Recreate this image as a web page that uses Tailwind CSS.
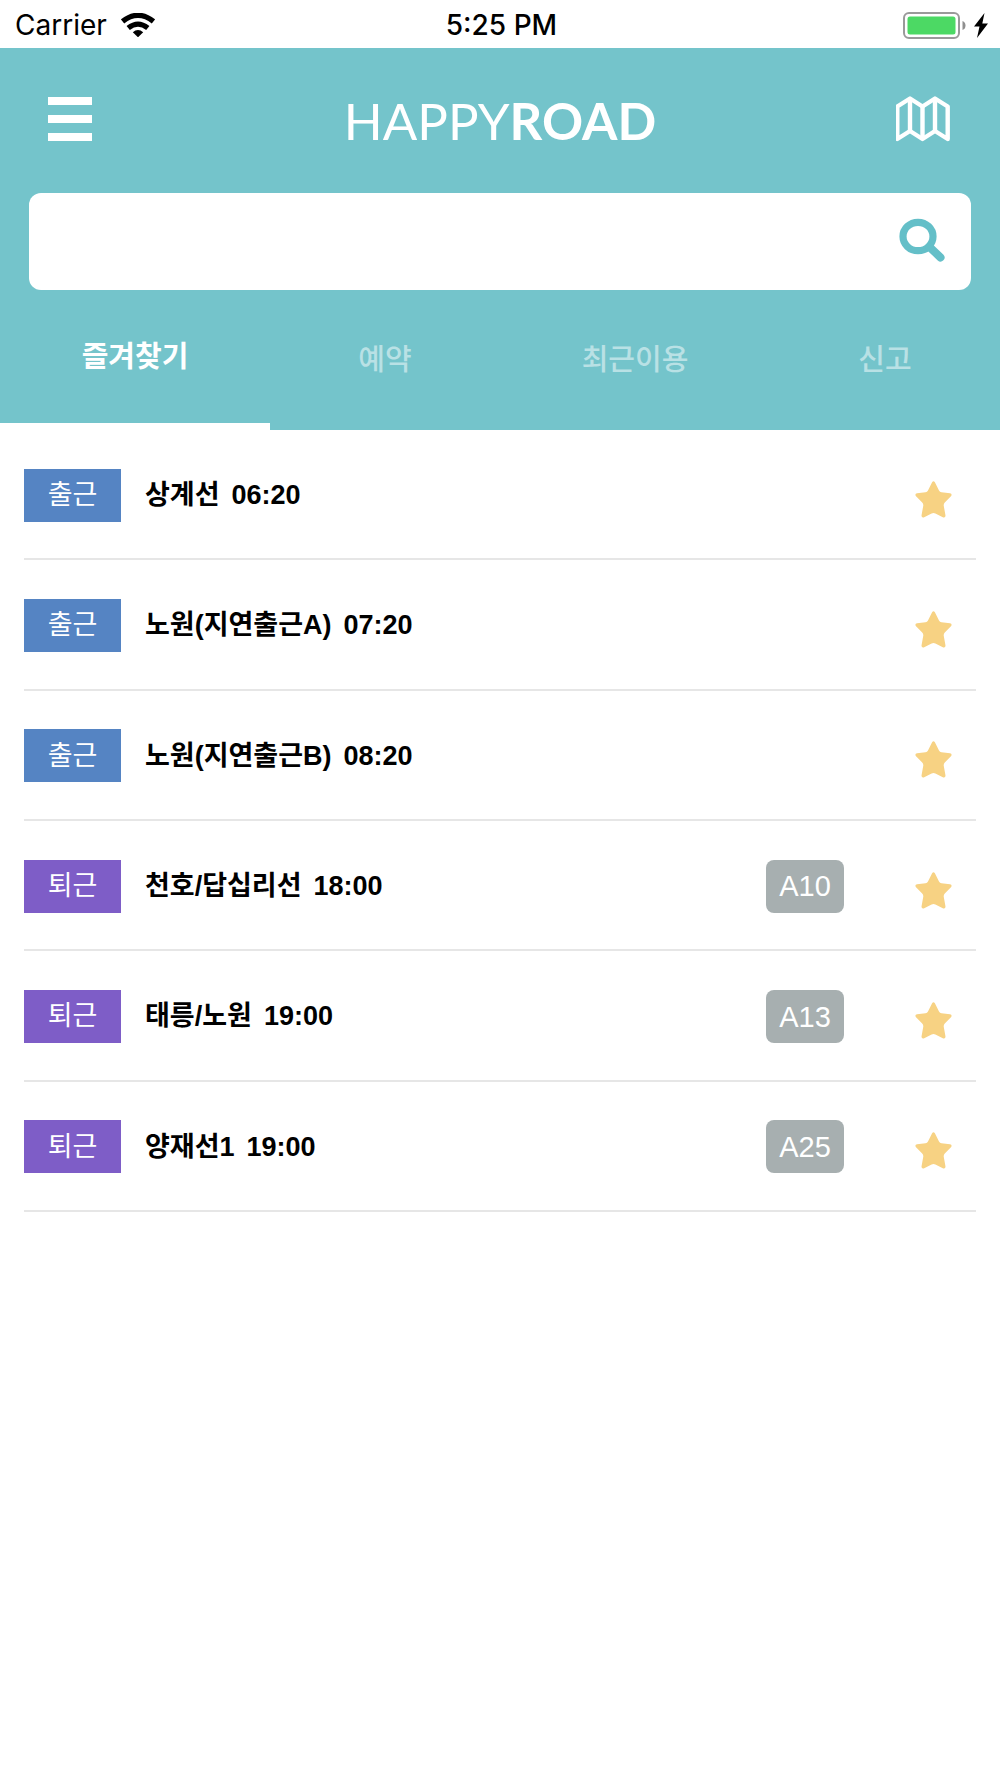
<!DOCTYPE html>
<html lang="ko">
<head>
<meta charset="utf-8">
<meta name="viewport" content="width=device-width, initial-scale=1">
<title>HAPPYROAD</title>
<script src="https://cdn.jsdelivr.net/npm/@tailwindcss/browser@4"></script>
</head>
<body class="min-h-screen bg-white font-['Liberation_Sans','Noto_Sans_CJK_KR',sans-serif] text-black">

<svg class="hidden" aria-hidden="true">
  <symbol id="star" viewBox="0 0 37 37">
    <path d="M17.100 1.300Q18.500-.7 19.900 1.300L24 9.500Q24.800 11 26.500 11.300L35 12.300Q37.400 13 36.200 15L29.800 21.600Q28.600 23 28.700 24.500L30.500 34.500Q30.500 37 28.300 36.500L20.400 32.400Q18.500 31.600 16.600 32.400L8.700 36.500Q6.500 37 6.500 34.500L8.300 24.500Q8.400 23 7.200 21.600L.8 15Q-.4 13 2 12.300L10.500 11.300Q12.200 11 13 9.500Z" fill="#f7d283"/>
  </symbol>
</svg>

<div class="grid h-12 grid-cols-3 items-center pt-0.5 pr-3 pl-[15px] font-['Inter',sans-serif] text-[28px]">
  <div class="flex items-center gap-3.5">
    <span>Carrier</span>
    <svg class="h-6 w-[34px]" viewBox="0 0 34 24" aria-label="Wi-Fi">
      <g fill="none" stroke="#000" stroke-width="5.200">
        <path d="M1.600 8.400Q17-3.800 32.400 8.400"/>
        <path d="M7.200 15Q17 7.200 26.800 15"/>
      </g>
      <path d="M11.800 19.200Q17 14.800 22.200 19.200L17 24.300Z"/>
    </svg>
  </div>
  <div class="text-center font-medium">5:25 PM</div>
  <div class="flex items-center justify-end gap-2">
    <svg class="h-[27px] w-[63px]" viewBox="0 0 63 27" aria-label="Battery">
      <rect x="1" y="1" width="55" height="25" rx="5" fill="#fff" stroke="#9a9a9a" stroke-width="2"/>
      <rect x="4.500" y="4.500" width="48" height="18" rx="2.500" fill="#4cd964"/>
      <path d="M59.500 9Q62.500 10 62.500 13.500T59.500 18Z" fill="#8f8f8f"/>
    </svg>
    <svg class="h-[25px] w-[14px]" viewBox="0 0 14 25" aria-label="Charging"><path d="M10.500 0L0 13.500H5.500L3 25L14 10.500H8.300Z"/></svg>
  </div>
</div>

<header class="bg-[#74c4cb] text-white">
  <div class="flex h-[145px] items-center justify-between px-12 pb-1">
    <button type="button" aria-label="메뉴" class="flex w-14 flex-col gap-2.5 pr-3">
      <span class="h-2 bg-white"></span>
      <span class="h-2 bg-white"></span>
      <span class="h-2 bg-white"></span>
    </button>
    <h1 class="pt-1 font-['Lato',sans-serif] text-[51px] leading-none font-normal">HAPPY<span class="font-bold">ROAD</span></h1>
    <button type="button" aria-label="지도">
      <svg class="h-[46px] w-14" viewBox="0 0 56 46" fill="none" stroke="#fff" stroke-width="4.400" stroke-linejoin="round">
        <path d="M1.300 10.500L14 2.500L26.500 10.500L39 2.500L51.700 10.500V43L39 35L26.500 43L14 35L1.300 43Z"/>
        <path d="M14 3V35M26.500 10.500V43M39 3V35"/>
      </svg>
    </button>
  </div>

  <form role="search" class="mx-[29px] flex h-[97px] items-center rounded-xl bg-white pr-[26px] pl-6">
    <input type="search" aria-label="검색" class="h-full min-w-0 flex-1 bg-transparent text-[29px] text-black outline-none">
    <button type="button" aria-label="검색" class="pb-1">
      <svg class="h-11 w-[46px]" viewBox="0 0 46 44" fill="none" stroke="#64bfc8">
        <ellipse cx="19" cy="18.500" rx="15" ry="14.200" stroke-width="7.200"/>
        <path d="M30.500 29L41.500 39.500" stroke-width="8" stroke-linecap="round"/>
      </svg>
    </button>
  </form>

  <nav class="grid h-[140px] grid-cols-[27fr_23fr_27fr_23fr] text-[29px] leading-8 font-medium text-white/50">
    <a href="#" aria-current="page" class="flex items-center justify-center border-b-7 border-white font-bold text-white">즐겨찾기</a>
    <a href="#" class="flex items-center justify-center">예약</a>
    <a href="#" class="flex items-center justify-center">최근이용</a>
    <a href="#" class="flex items-center justify-center">신고</a>
  </nav>
</header>

<main class="px-6">
  <ul class="grid min-h-[782px] auto-rows-fr">
    <li class="flex items-center border-b-2 border-[#e6e6e6] pt-0.5 pr-6">
      <span class="flex h-[53px] w-[97px] items-center justify-center bg-[#5584c3] text-[27px] font-normal text-white">출근</span>
      <a href="#" class="ml-6 flex flex-1 gap-3 text-[27px] font-bold"><span>상계선</span><span>06:20</span></a>
      <button type="button" aria-label="즐겨찾기 해제" class="pt-2"><svg class="size-[37px]"><use href="#star"/></svg></button>
    </li>
    <li class="flex items-center border-b-2 border-[#e6e6e6] pt-0.5 pr-6">
      <span class="flex h-[53px] w-[97px] items-center justify-center bg-[#5584c3] text-[27px] font-normal text-white">출근</span>
      <a href="#" class="ml-6 flex flex-1 gap-3 text-[27px] font-bold"><span>노원(지연출근A)</span><span>07:20</span></a>
      <button type="button" aria-label="즐겨찾기 해제" class="pt-2"><svg class="size-[37px]"><use href="#star"/></svg></button>
    </li>
    <li class="flex items-center border-b-2 border-[#e6e6e6] pt-0.5 pr-6">
      <span class="flex h-[53px] w-[97px] items-center justify-center bg-[#5584c3] text-[27px] font-normal text-white">출근</span>
      <a href="#" class="ml-6 flex flex-1 gap-3 text-[27px] font-bold"><span>노원(지연출근B)</span><span>08:20</span></a>
      <button type="button" aria-label="즐겨찾기 해제" class="pt-2"><svg class="size-[37px]"><use href="#star"/></svg></button>
    </li>
    <li class="flex items-center border-b-2 border-[#e6e6e6] pt-0.5 pr-6">
      <span class="flex h-[53px] w-[97px] items-center justify-center bg-[#7e5dc7] text-[27px] font-normal text-white">퇴근</span>
      <a href="#" class="ml-6 flex flex-1 gap-3 text-[27px] font-bold"><span>천호/답십리선</span><span>18:00</span></a>
      <span class="mr-[71px] flex h-[53px] w-[78px] items-center justify-center rounded-lg bg-[#a7afb0] pt-0.5 text-[29px] text-white">A10</span>
      <button type="button" aria-label="즐겨찾기 해제" class="pt-2"><svg class="size-[37px]"><use href="#star"/></svg></button>
    </li>
    <li class="flex items-center border-b-2 border-[#e6e6e6] pt-0.5 pr-6">
      <span class="flex h-[53px] w-[97px] items-center justify-center bg-[#7e5dc7] text-[27px] font-normal text-white">퇴근</span>
      <a href="#" class="ml-6 flex flex-1 gap-3 text-[27px] font-bold"><span>태릉/노원</span><span>19:00</span></a>
      <span class="mr-[71px] flex h-[53px] w-[78px] items-center justify-center rounded-lg bg-[#a7afb0] pt-0.5 text-[29px] text-white">A13</span>
      <button type="button" aria-label="즐겨찾기 해제" class="pt-2"><svg class="size-[37px]"><use href="#star"/></svg></button>
    </li>
    <li class="flex items-center border-b-2 border-[#e6e6e6] pt-0.5 pr-6">
      <span class="flex h-[53px] w-[97px] items-center justify-center bg-[#7e5dc7] text-[27px] font-normal text-white">퇴근</span>
      <a href="#" class="ml-6 flex flex-1 gap-3 text-[27px] font-bold"><span>양재선1</span><span>19:00</span></a>
      <span class="mr-[71px] flex h-[53px] w-[78px] items-center justify-center rounded-lg bg-[#a7afb0] pt-0.5 text-[29px] text-white">A25</span>
      <button type="button" aria-label="즐겨찾기 해제" class="pt-2"><svg class="size-[37px]"><use href="#star"/></svg></button>
    </li>
  </ul>
</main>
</body>
</html>
